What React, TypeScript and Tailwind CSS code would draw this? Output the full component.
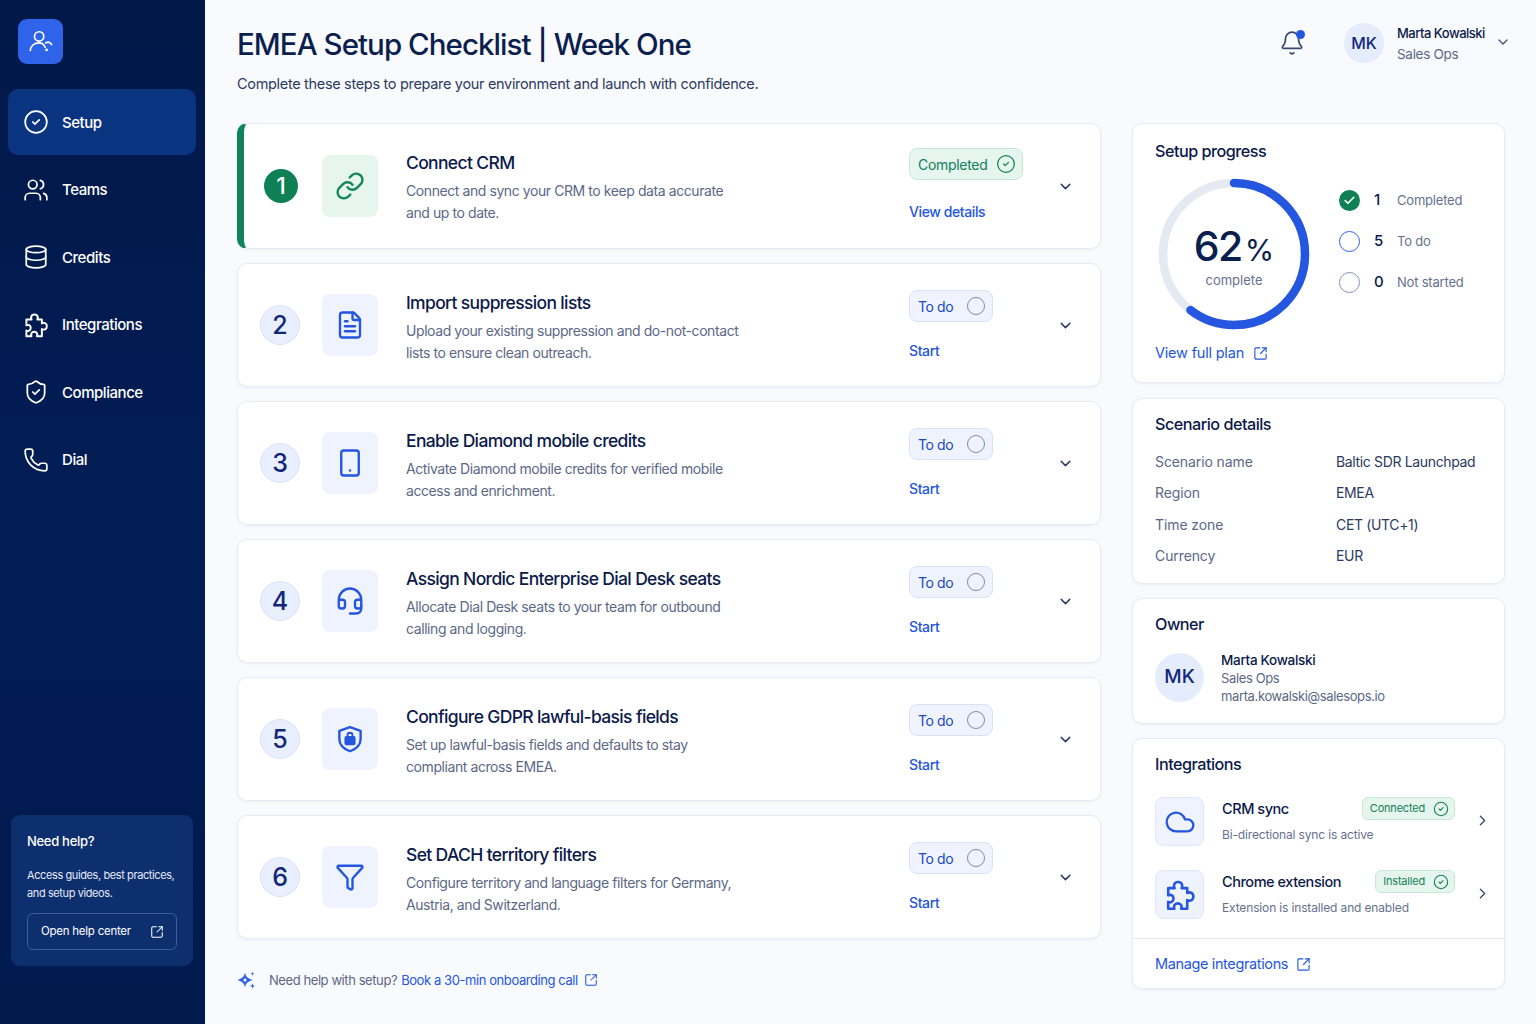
import React from 'react';
import {
  Bell,
  Check,
  ChevronDown,
  ChevronRight,
  CircleCheck,
  Cloud,
  Database,
  FileText,
  Funnel,
  Headset,
  Link,
  Phone,
  ShieldCheck,
  Smartphone,
  SquareArrowOutUpRight,
  Users,
} from 'lucide-react';

type IconProps = { className?: string; strokeWidth?: number };

const ShieldLock: React.FC<IconProps> = ({ className, strokeWidth = 2 }) => (
  <svg viewBox="0 0 24 24" fill="none" stroke="currentColor" strokeWidth={strokeWidth} strokeLinecap="round" strokeLinejoin="round" className={className}>
    <path d="M12 2.5 20.5 5.5V12c0 5-3.6 8-8.5 9.800C7.100 20 3.500 17 3.500 12V5.500Z" />
    <rect x="8.500" y="10.500" width="7" height="5.500" rx="0.600" fill="currentColor" />
    <path d="M10 10.500V9a2 2 0 0 1 4 0v1.500" strokeWidth="1.500" />
  </svg>
);

const PuzzlePiece: React.FC<IconProps> = ({ className, strokeWidth = 2 }) => (
  <svg viewBox="2.250 1 21 21" fill="none" stroke="currentColor" strokeWidth={strokeWidth} strokeLinecap="round" strokeLinejoin="round" className={className}>
    <path d="M5 7H9.200C8.300 5.500 8.800 3 11.500 3S14.700 5.500 13.800 7H17.500V10.200C19 9.300 21.500 9.800 21.500 12.500S19 15.700 17.500 14.800V20.500H13.500C14.200 19 13.500 17 11.300 17S8.400 19 9.100 20.500H5V16C6.500 16.700 8.500 16 8.500 13.800S6.500 11 5 11.700Z" />
  </svg>
);

const SparkleMark: React.FC = () => (
  <svg viewBox="0 0 20 20" fill="currentColor" className="w-5 h-5 text-[#2f63ea]">
    <path d="M8 2.500C8.700 6.300 10 7.900 15.500 10C10 12.100 8.700 13.700 8 17.500C7.300 13.700 6 12.100 .5 10C6 7.900 7.300 6.300 8 2.500Z" />
    <circle cx="8" cy="10" r="1.500" fill="white" />
    <path d="M15.500 1.500C15.700 3 16 3.500 17.500 3.800C16 4.100 15.700 4.600 15.500 6C15.300 4.600 15 4.100 13.500 3.800C15 3.500 15.300 3 15.500 1.500Z" />
    <path d="M15.500 13C15.800 15 16.300 15.700 18.300 16C16.300 16.300 15.800 17 15.500 19C15.200 17 14.700 16.300 12.700 16C14.700 15.700 15.200 15 15.500 13Z" />
  </svg>
);

const LogoMark: React.FC = () => (
  <svg viewBox="0 0 28 28" fill="none" stroke="white" strokeWidth="1.800" strokeLinecap="round" className="w-[26px] h-[26px]">
    <circle cx="12" cy="8" r="5" />
    <path d="M2.500 23c.6-5 4.400-8 9.500-8 3.300 0 5.200 1.600 6.400 4.600" />
    <path d="M19 15c2.600-1.500 5-.6 6.500 1.800" />
    <circle cx="20" cy="22.500" r="0.600" fill="white" />
  </svg>
);

const navItems = [
  { label: 'Setup', icon: CircleCheck, active: true },
  { label: 'Teams', icon: Users },
  { label: 'Credits', icon: Database },
  { label: 'Integrations', icon: PuzzlePiece },
  { label: 'Compliance', icon: ShieldCheck },
  { label: 'Dial', icon: Phone },
];

const steps = [
  { title: 'Connect CRM', desc: ['Connect and sync your CRM to keep data accurate', 'and up to date.'], icon: Link, done: true },
  { title: 'Import suppression lists', desc: ['Upload your existing suppression and do-not-contact', 'lists to ensure clean outreach.'], icon: FileText },
  { title: 'Enable Diamond mobile credits', desc: ['Activate Diamond mobile credits for verified mobile', 'access and enrichment.'], icon: Smartphone },
  { title: 'Assign Nordic Enterprise Dial Desk seats', desc: ['Allocate Dial Desk seats to your team for outbound', 'calling and logging.'], icon: Headset },
  { title: 'Configure GDPR lawful-basis fields', desc: ['Set up lawful-basis fields and defaults to stay', 'compliant across EMEA.'], icon: ShieldLock },
  { title: 'Set DACH territory filters', desc: ['Configure territory and language filters for Germany,', 'Austria, and Switzerland.'], icon: Funnel },
];

const scenario = [
  ['Scenario name', 'Baltic SDR Launchpad'],
  ['Region', 'EMEA'],
  ['Time zone', 'CET (UTC+1)'],
  ['Currency', 'EUR'],
];

const integrations = [
  { name: 'CRM sync', desc: 'Bi-directional sync is active', badge: 'Connected', icon: Cloud },
  { name: 'Chrome extension', desc: 'Extension is installed and enabled', badge: 'Installed', icon: PuzzlePiece },
];

const cardClass = 'bg-white rounded-[10px] border border-[#e8ebf4] shadow-[0_1px_3px_rgba(30,50,110,0.06)]';
const headingClass = 'text-[#0b1a4b] text-[16.2px] font-medium leading-[22px] tracking-[-0.5px]';

const Sidebar: React.FC = () => (
  <aside className="w-[205px] shrink-0 h-[1024px] flex flex-col bg-[#021a50] bg-gradient-to-b from-[#011848] via-[#021d56] to-[#011a4e] px-2 pt-[19px] pb-[58px]">
    <div className="ml-2.5 w-[45px] h-[45px] rounded-[9px] bg-[#2f63ea] flex items-center justify-center">
      <LogoMark />
    </div>
    <nav className="mt-[25px] flex flex-col gap-[1.5px]">
      {navItems.map(item => (
        <div
          key={item.label}
          className={`h-[66px] w-[188px] rounded-[10px] flex items-center gap-[13px] pl-[15px] pt-[2px] text-white text-[15px] font-medium tracking-[-0.45px] ${item.active ? 'bg-[#0a3380]' : ''}`}
        >
          <item.icon className="w-[26px] h-[26px] -mt-[2px]" strokeWidth={1.6} />
          {item.label}
        </div>
      ))}
    </nav>
    <div className="mt-auto ml-[3px] w-[182px] h-[151px] rounded-[9px] bg-[#0e2f6e] px-4 pt-[18px]">
      <div className="text-white text-[13px] font-medium leading-[17px] tracking-[-0.3px]">Need help?</div>
      <p className="mt-[16px] text-[#e3e9f7] text-[11px] leading-[18px] tracking-[-0.4px] whitespace-nowrap">
        Access guides, best practices,
        <br />
        and setup videos.
      </p>
      <div className="mt-[11px] h-[37px] w-[150px] rounded-[6px] border border-[#3f5c94] flex items-center justify-between pl-[13px] pr-[12px] text-white text-[11.5px] tracking-[-0.25px]">
        Open help center
        <SquareArrowOutUpRight className="w-[14px] h-[14px]" strokeWidth={1.8} />
      </div>
    </div>
  </aside>
);

const StepCard: React.FC<{ step: (typeof steps)[number]; index: number }> = ({ step, index }) => (
  <div className={`${cardClass} relative overflow-hidden flex ${step.done ? 'h-[126px] border-l-[7px] border-l-[#10835a]' : 'h-[124px]'}`}>
    <div className={`flex items-center ${step.done ? 'pl-[19px]' : 'pl-[22px]'}`}>
      {step.done ? (
        <div className="w-[34px] h-[34px] ml-[1px] mr-[2px] rounded-full bg-[#0f7f56] text-white flex items-center justify-center text-[23px] font-medium">
          {index + 1}
        </div>
      ) : (
        <div className="w-10 h-10 pt-[1px] rounded-full bg-[#e9effc] border border-[#d9e3f8] text-[#10277c] flex items-center justify-center text-[25px] font-medium">
          {index + 1}
        </div>
      )}
    </div>
    <div className="flex items-center ml-[22px]">
      <div className={`w-[56px] h-[62px] rounded-[8px] flex items-center justify-center ${step.done ? 'bg-[#e6f5ee] text-[#14865c]' : 'bg-[#eff3fd] text-[#2456e0]'}`}>
        <step.icon className="w-[30px] h-[30px]" strokeWidth={1.9} />
      </div>
    </div>
    <div className="ml-[28px] w-[503px] pt-[27px]">
      <div className="text-[#0b1a4b] text-[17.5px] font-medium leading-[24px] tracking-[-0.65px]">{step.title}</div>
      <p className="mt-[5px] text-[#5c6887] text-[14px] leading-[21.5px] tracking-[-0.42px]">
        {step.desc[0]}
        <br />
        {step.desc[1]}
      </p>
    </div>
    <div className="w-[149px] flex flex-col items-start pt-[26px]">
      {step.done ? (
        <div className="h-8 w-[114px] -mt-[2px] rounded-[8px] bg-[#e6f5ee] border border-[#c5e8d8] flex items-center justify-between pl-2 pr-[6px] text-[#14805a] text-[14px] tracking-[-0.3px]">
          Completed
          <CircleCheck className="w-[20px] h-[20px]" strokeWidth={1.5} />
        </div>
      ) : (
        <div className="h-8 w-[84px] rounded-[8px] bg-[#eff3fd] border border-[#d9e3f8] flex items-center justify-between pl-2 pr-[7px] text-[#1c48b8] text-[14px] tracking-[-0.4px]">
          To do
          <span className="w-[18px] h-[18px] rounded-full border-[1.5px] border-[#7c89ad]" />
        </div>
      )}
      <a className={`text-[#2456e0] text-[14px] font-medium leading-5 tracking-[-0.4px] ${step.done ? 'mt-[22px]' : 'mt-[19px]'}`}>
        {step.done ? 'View details' : 'Start'}
      </a>
    </div>
    <div className="flex items-center">
      <ChevronDown className="w-[17px] h-[17px] text-[#2d3a63] -ml-[1px]" strokeWidth={2} />
    </div>
  </div>
);

const Legend: React.FC<{ count: number; label: string; children: React.ReactNode }> = ({ count, label, children }) => (
  <div className="flex items-center h-[21px]">
    <div className="w-[21px] h-[21px] flex items-center justify-center">{children}</div>
    <span className="ml-[14px] w-[23px] text-[#0b1a4b] text-[15px] font-medium">{count}</span>
    <span className="text-[#66718f] text-[13px] tracking-[-0.2px]">{label}</span>
  </div>
);

const SetupProgress: React.FC = () => (
  <div className={`${cardClass} h-[260px] px-[22px] pt-[16px]`}>
    <div className={headingClass}>Setup progress</div>
    <div className="flex mt-[16px]">
      <div className="relative w-[152px] h-[152px] ml-[3px] shrink-0">
        <svg viewBox="0 0 152 152" className="w-[152px] h-[152px] -rotate-90">
          <circle cx="76" cy="76" r="71" fill="none" stroke="#e5e9f2" strokeWidth="8.500" />
          <circle cx="76" cy="76" r="71" fill="none" stroke="#2456e0" strokeWidth="8.500" strokeLinecap="round" pathLength={100} strokeDasharray="60.500 100" />
        </svg>
        <div className="absolute inset-0 flex flex-col items-center pt-[44px]">
          <div className="flex items-baseline text-[#0b1f4f] leading-[48px]">
            <span className="text-[41px] font-medium tracking-[-1.5px]">62</span>
            <span className="text-[30px] ml-[3px]">%</span>
          </div>
          <span className="text-[#66718f] text-[13px] leading-[18px] -mt-[3px]">complete</span>
        </div>
      </div>
      <div className="ml-[29px] mt-[12px] flex flex-col gap-[20px]">
        <Legend count={1} label="Completed">
          <span className="w-[21px] h-[21px] rounded-full bg-[#0f7f56] flex items-center justify-center">
            <Check className="w-[13px] h-[13px] text-white" strokeWidth={3} />
          </span>
        </Legend>
        <Legend count={5} label="To do">
          <span className="w-[21px] h-[21px] rounded-full border-[1.5px] border-[#2f5fe4]" />
        </Legend>
        <Legend count={0} label="Not started">
          <span className="w-[21px] h-[21px] rounded-full border-[1.5px] border-[#8492b5]" />
        </Legend>
      </div>
    </div>
    <a className="mt-[13px] flex items-center gap-[9px] text-[#2456e0] text-[14.5px] leading-5 tracking-[-0.2px]">
      View full plan
      <SquareArrowOutUpRight className="w-[15px] h-[15px]" strokeWidth={1.8} />
    </a>
  </div>
);

const ScenarioDetails: React.FC = () => (
  <div className={`${cardClass} h-[186px] mt-[1px] px-[22px] pt-[14px]`}>
    <div className={headingClass}>Scenario details</div>
    <div className="mt-[11px] grid grid-cols-[181px_1fr] auto-rows-[31.3px] items-center text-[14px] tracking-[-0.1px] whitespace-nowrap">
      {scenario.map(([label, value]) => (
        <React.Fragment key={label}>
          <span className="text-[#5c6887]">{label}</span>
          <span className="text-[#2c3a61] tracking-[-0.35px]">{value}</span>
        </React.Fragment>
      ))}
    </div>
  </div>
);

const Owner: React.FC = () => (
  <div className={`${cardClass} h-[126px] px-[22px] pt-[14px]`}>
    <div className={headingClass}>Owner</div>
    <div className="mt-[15px] flex items-center">
      <div className="w-[49px] h-[49px] -mt-[1px] rounded-full bg-[#e5ecfb] text-[#10277c] flex items-center justify-center text-[19px] font-medium">MK</div>
      <div className="ml-[17px] mt-[1px] leading-[18px] text-[13px] tracking-[-0.37px]">
        <div className="text-[#0b1a4b] text-[13.5px] font-medium tracking-[-0.3px]">Marta Kowalski</div>
        <div className="text-[#5c6887]">Sales Ops</div>
        <div className="text-[#5c6887]">marta.kowalski@salesops.io</div>
      </div>
    </div>
  </div>
);

const Integrations: React.FC = () => (
  <div className={`${cardClass} h-[251px] pt-[14px]`}>
    <div className={`px-[22px] ${headingClass}`}>Integrations</div>
    <div className="mt-[22px] flex flex-col gap-[24px] pl-[22px] pr-[8px]">
      {integrations.map(item => (
        <div key={item.name} className="flex h-[49px]">
          <div className="w-[49px] h-[49px] shrink-0 rounded-[8px] bg-[#eff3fd] border border-[#e0e7f8] flex items-center justify-center text-[#2456e0]">
            <item.icon className="w-8 h-8" strokeWidth={1.7} />
          </div>
          <div className="ml-[18px] w-[233px] shrink-0">
            <div className="flex items-center justify-between h-[23px]">
              <span className="text-[#0b1a4b] text-[14.5px] font-medium tracking-[-0.45px]">{item.name}</span>
              <span className="h-[23px] rounded-[6px] bg-[#e6f5ee] border border-[#c5e8d8] pl-[7px] pr-[5px] flex items-center gap-2 text-[#14805a] text-[11px] tracking-[-0.2px]">
                {item.badge}
                <CircleCheck className="w-4 h-4" strokeWidth={1.6} />
              </span>
            </div>
            <div className="mt-[6px] text-[#66718f] text-[12px] leading-[18px] tracking-[-0.15px]">{item.desc}</div>
          </div>
          <div className="ml-[19px] h-[46px] flex items-center">
            <ChevronRight className="w-[17px] h-[17px] text-[#3a4770]" strokeWidth={1.8} />
          </div>
        </div>
      ))}
    </div>
    <div className="mt-[19px] border-t border-[#e8ebf4] px-[22px] pt-[15px]">
      <a className="flex items-center gap-[8px] text-[#2456e0] text-[14.5px] leading-5 tracking-[-0.37px]">
        Manage integrations
        <SquareArrowOutUpRight className="w-[15px] h-[15px]" strokeWidth={1.8} />
      </a>
    </div>
  </div>
);

export default function App() {
  return (
    <div className="w-[1536px] h-[1024px] overflow-hidden flex bg-[#f9fafd] font-['Inter',sans-serif]">
      <Sidebar />
      <main className="flex-1 pl-8 pr-[31px]">
        <header className="h-[123px] flex justify-between">
          <div className="pt-[24px]">
            <h1 className="text-[#0b1f4f] text-[29.5px] font-medium leading-[40px] tracking-[-0.95px]">EMEA Setup Checklist | Week One</h1>
            <p className="mt-[10px] text-[#2c3a61] text-[14.5px] leading-[20px] tracking-[-0.32px]">
              Complete these steps to prepare your environment and launch with confidence.
            </p>
          </div>
          <div className="flex items-start pt-[23px] -mr-[6px]">
            <div className="relative mt-[7px] mr-[39px]">
              <Bell className="w-[26px] h-[26px] text-[#3a4770]" strokeWidth={1.5} />
              <span className="absolute top-0 right-0 w-[9px] h-[9px] rounded-full bg-[#2456e0]" />
            </div>
            <div className="w-10 h-10 rounded-full bg-[#e5ecfb] text-[#10277c] flex items-center justify-center text-[16px] font-medium">MK</div>
            <div className="ml-[13px] w-[98px]">
              <div className="text-[#0b1a4b] text-[13px] font-medium leading-[20px] tracking-[-0.5px]">Marta Kowalski</div>
              <div className="text-[#5c6887] text-[13.5px] leading-[20px] mt-[1px] tracking-[-0.3px]">Sales Ops</div>
            </div>
            <ChevronDown className="w-4 h-4 mt-[11px] text-[#3a4770]" strokeWidth={1.8} />
          </div>
        </header>
        <div className="flex justify-between">
          <div className="w-[864px]">
            <div className="flex flex-col gap-[14px]">
              {steps.map((step, i) => (
                <StepCard key={step.title} step={step} index={i} />
              ))}
            </div>
            <div className="mt-[31px] flex items-center text-[13px] tracking-[-0.42px] leading-5">
              <SparkleMark />
              <span className="ml-[12px] text-[#5c6887]">Need help with setup?</span>
              <a className="ml-[4px] text-[#2456e0]">Book a 30-min onboarding call</a>
              <SquareArrowOutUpRight className="ml-[6px] w-[14px] h-[14px] text-[#2456e0]" strokeWidth={1.8} />
            </div>
          </div>
          <div className="w-[373px] flex flex-col gap-[14px]">
            <SetupProgress />
            <ScenarioDetails />
            <Owner />
            <Integrations />
          </div>
        </div>
      </main>
    </div>
  );
}
